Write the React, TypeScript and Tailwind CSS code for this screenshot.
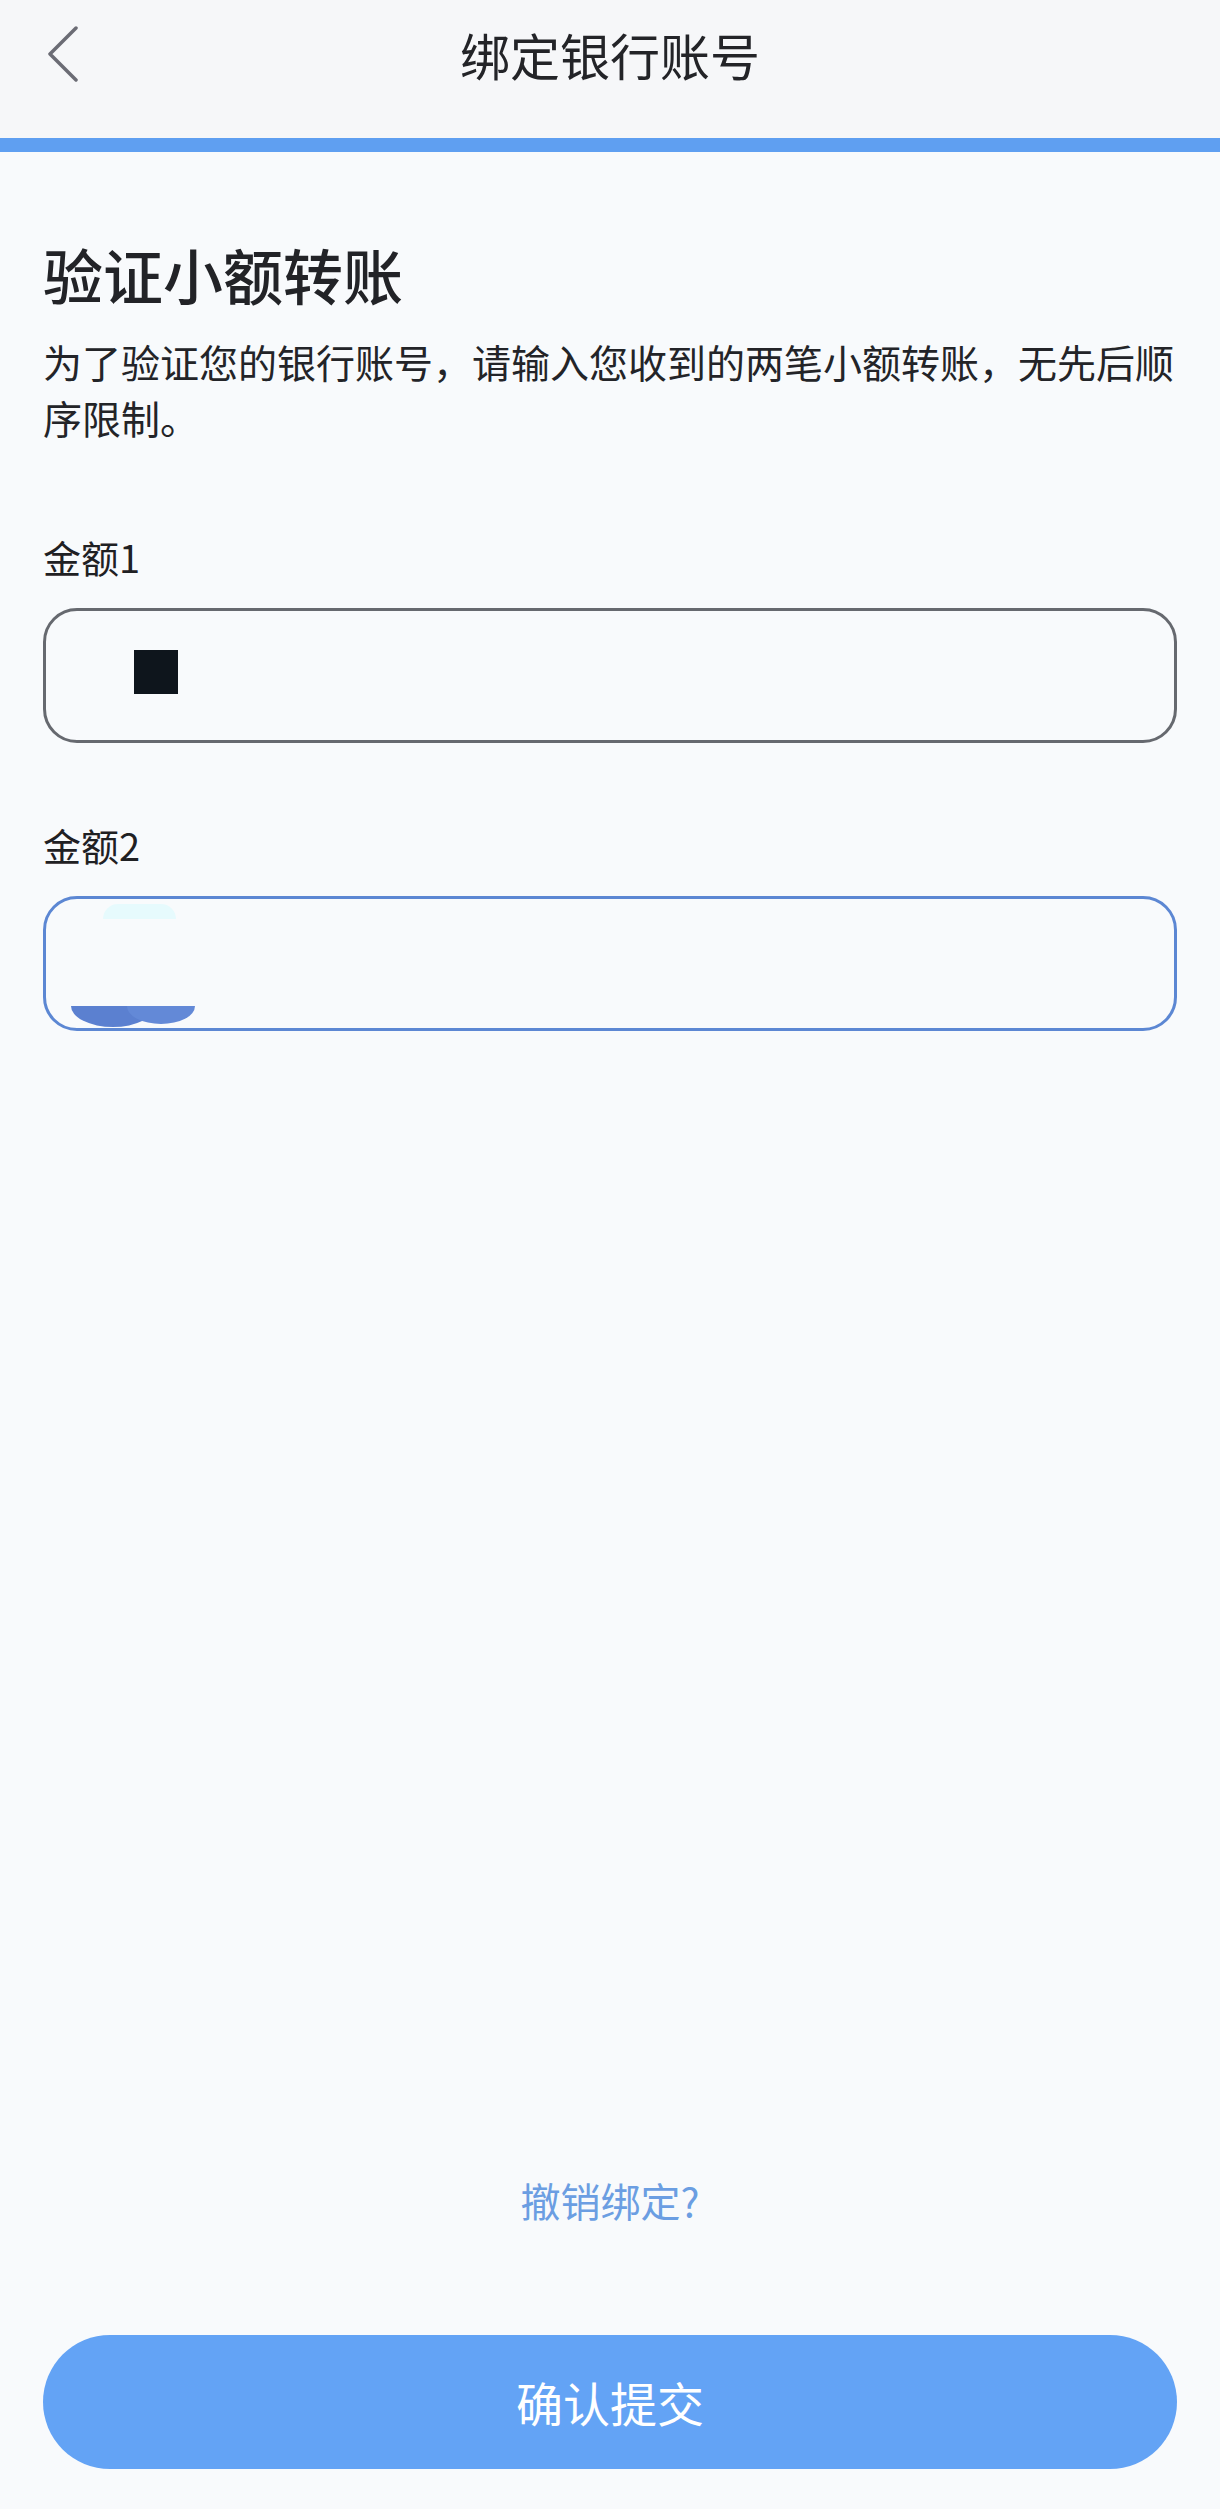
import React from "react";

const FONT = '"Noto Sans CJK SC", "Noto Sans", sans-serif';

function BackIcon() {
  return (
    <svg width="34" height="56" viewBox="0 0 34 56" fill="none">
      <path d="M30 2 L4 28 L30 54" stroke="#6b6c75" strokeWidth="3.5" strokeLinecap="round" strokeLinejoin="round" />
    </svg>
  );
}

function AmountField({ label, active, children }: { label: string; active?: boolean; children?: React.ReactNode }) {
  return (
    <div className="flex flex-col">
      <label className="text-[38px] leading-[46px] text-[#1f2023]">{label}</label>
      <div
        className={`relative mt-[28px] h-[135px] rounded-[34px] border-[3px] flex items-center pl-[88px] ${
          active ? "border-[#5c87d3]" : "border-[#66696f]"
        }`}
      >
        {children}
      </div>
    </div>
  );
}

export default function App() {
  return (
    <div className="min-h-screen flex flex-col bg-[#f8fafc]" style={{ fontFamily: FONT }}>
      {/* Header */}
      <div className="h-[138px] bg-[#f6f7f9]">
        <div className="h-[108px] grid grid-cols-[1fr_auto_1fr] items-center">
          <button className="justify-self-start pl-[46px] flex items-center">
            <BackIcon />
          </button>
          <h1 className="text-[50px] leading-none text-[#232428]">绑定银行账号</h1>
          <div />
        </div>
      </div>
      <div className="h-[14px] bg-[#5f9ff1]" />

      {/* Content */}
      <div className="flex-1 flex flex-col px-[43px]">
        <h2 className="mt-[86px] text-[60px] leading-[72px] font-medium text-[#222327]">验证小额转账</h2>
        <p className="mt-[23px] text-[39px] leading-[56px] text-[#232428]">
          为了验证您的银行账号，请输入您收到的两笔小额转账，无先后顺序限制。
        </p>

        <div className="mt-[89px]">
          <AmountField label="金额1">
            <span className="block w-[44px] h-[44px] bg-[#0e151c] -mt-[7px]" />
          </AmountField>
        </div>

        <div className="mt-[79px]">
          <AmountField label="金额2" active>
            <span className="absolute left-[57px] top-[5px] w-[73px] h-[15px] rounded-t-full bg-[#e6fafd]" />
            <svg className="absolute left-[25px] top-[107px]" width="124" height="22" viewBox="0 0 124 22">
              <path d="M0 0 A42 21 0 0 0 84 0 Z" fill="#5b80d0" />
              <path d="M56 0 A34 18 0 0 0 124 0 Z" fill="#6389d7" />
            </svg>
          </AmountField>
        </div>

        <div className="mt-auto flex flex-col items-center">
          <button className="text-[40px] leading-[46px] text-[#6b9ee2]">撤销绑定?</button>
          <button className="mt-[112px] mb-[40px] w-full h-[134px] rounded-full bg-[#63a3f5] text-white text-[47px]">
            确认提交
          </button>
        </div>
      </div>
    </div>
  );
}
